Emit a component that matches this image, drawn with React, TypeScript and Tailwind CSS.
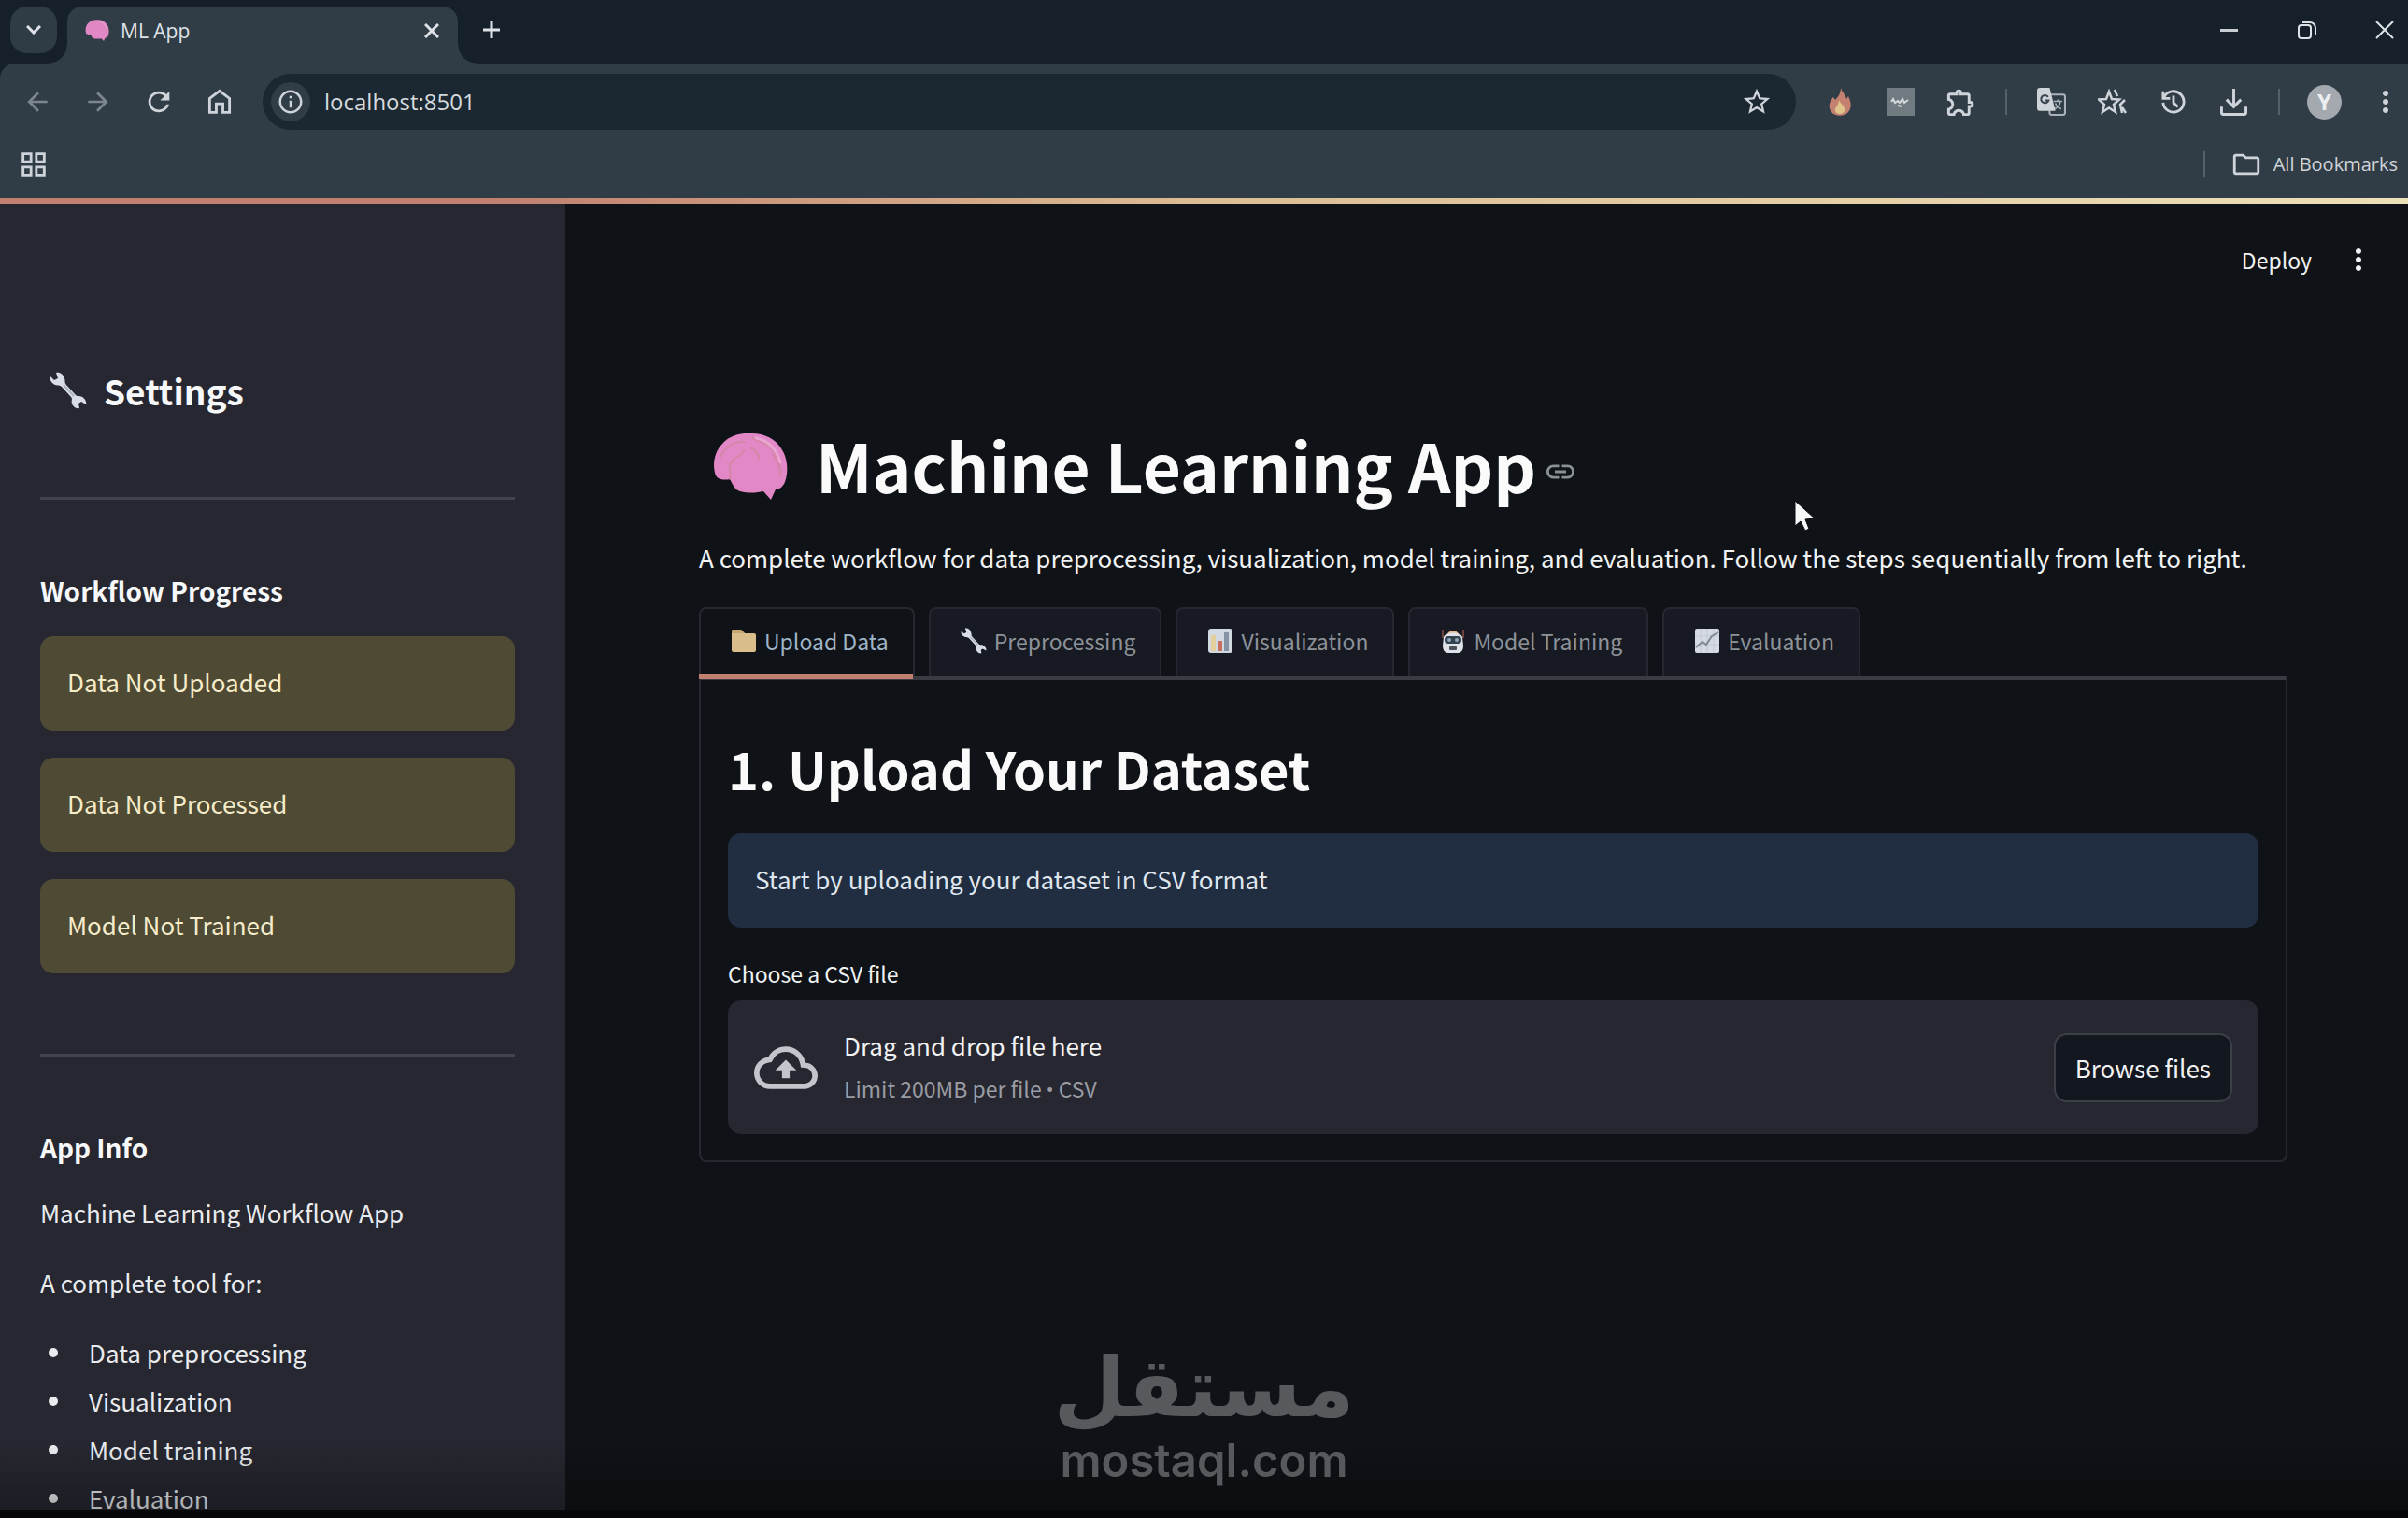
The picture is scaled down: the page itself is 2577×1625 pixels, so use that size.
import React, { useRef } from "react";
import {
  MdArrowBack,
  MdArrowForward,
  MdInfoOutline,
  MdLink,
  MdMoreVert,
  MdOutlineCloudUpload,
  MdOutlineExtension,
  MdOutlineFolder,
  MdOutlineGridView,
  MdRefresh,
  MdStarBorder,
} from "react-icons/md";

type IconProps = { className?: string };

const BrainIcon = ({ className }: IconProps) => (
  <svg viewBox="0 0 80 72" className={className} aria-hidden="true">
    <path
      d="M3 46C-1 36 1 21 10 12C18 3 30 0 42 1C55 1 67 7 73 17C80 27 81 42 77 53C75 58 71 61 67 61L62 72L54 63C46 65 30 66 24 60C21 57 20 53 18 50C12 51 6 51 3 46Z"
      fill="#e388c6"
    />
    <path
      d="M8 26C14 14 24 9 34 10M18 50C20 42 15 38 20 31C24 25 31 26 33 19M42 5C48 12 58 8 62 16M56 12C66 18 70 27 69 36M64 24C70 31 74 38 72 46M40 16C46 19 49 22 49 28"
      fill="none"
      stroke="#c9868f"
      strokeWidth="2"
      strokeLinecap="round"
      opacity="0.6"
    />
    <path d="M46 6C58 8 68 17 72 32" fill="none" stroke="#f0b2dc" strokeWidth="3" strokeLinecap="round" opacity="0.7" />
  </svg>
);

const WrenchIcon = ({ className }: IconProps) => (
  <svg viewBox="0 0 40 40" className={className} aria-hidden="true">
    <path
      d="M7 1C11 0 15 3 16 7C17 10 16 12 18 14L28 25C30 27 32 25 35 27C38 29 40 32 39 35L34 32L31 34L32 39C28 40 25 37 24 34C23 31 25 29 23 27L13 16C11 14 9 15 6 14C2 12 0 9 1 5L5 9L9 7Z"
      fill="#d9dee6"
    />
    <path d="M15 14L26 26" stroke="#a9b2bf" strokeWidth="2" />
  </svg>
);

const FolderEmoji = ({ className }: IconProps) => (
  <svg viewBox="0 0 28 28" className={className} aria-hidden="true">
    <path d="M1 4a2 2 0 0 1 2-2h8l4 4h10a2 2 0 0 1 2 2v16a2 2 0 0 1-2 2H3a2 2 0 0 1-2-2z" fill="#d9bd8b" />
    <path d="M1 4a2 2 0 0 1 2-2h8l4 4H1z" fill="#c8a56c" />
  </svg>
);

const BarsEmoji = ({ className }: IconProps) => (
  <svg viewBox="0 0 28 28" className={className} aria-hidden="true">
    <rect x="1" y="1" width="26" height="26" rx="3" fill="#d3d9e0" />
    <rect x="4" y="8" width="5" height="17" fill="#e2cf9b" />
    <rect x="11" y="14" width="5" height="11" fill="#c8705f" />
    <rect x="18" y="5" width="5" height="20" fill="#8494a5" />
  </svg>
);

const RobotEmoji = ({ className }: IconProps) => (
  <svg viewBox="0 0 28 28" className={className} aria-hidden="true">
    <path d="M3 2v9M25 2v9" stroke="#6e413b" strokeWidth="2" />
    <path d="M8 7C9 2 19 2 20 7z" fill="#e2b98f" />
    <path d="M4 10C6 4 22 4 24 10L25 19C25 25 22 27 19 27H9C6 27 3 25 3 19z" fill="#dfe2e8" />
    <rect x="5" y="9" width="18" height="8" rx="4" fill="#33424f" />
    <circle cx="10" cy="13" r="2" fill="#8fa8ba" />
    <circle cx="18" cy="13" r="2" fill="#8fa8ba" />
    <rect x="10" y="20" width="8" height="4" rx="1" fill="#4b525c" />
  </svg>
);

const TrendEmoji = ({ className }: IconProps) => (
  <svg viewBox="0 0 28 28" className={className} aria-hidden="true">
    <rect x="1" y="1" width="26" height="26" rx="2" fill="#d6dae2" />
    <path d="M7 1v26M14 1v26M21 1v26M1 9h26M1 18h26" stroke="#c3c9d2" />
    <path d="M2 21L9 15L13 18L19 9L26 5" fill="none" stroke="#7e8a90" strokeWidth="2" />
  </svg>
);

const HomeIcon = ({ className }: IconProps) => (
  <svg viewBox="0 0 24 24" className={className} fill="none" stroke="currentColor" strokeWidth="2" aria-hidden="true">
    <path d="M4.5 20V9.5L12 3.8l7.500 5.700V20h-5v-6.500h-5V20z" />
  </svg>
);

const FireIcon = ({ className }: IconProps) => (
  <svg viewBox="0 0 24 30" className={className} aria-hidden="true">
    <path d="M13 0C15 6 18 7 19 12L21 9C24 15 25 21 21 26C17 31 7 31 3 26C-2 19 2 14 5 10L7 13C10 10 13 6 13 0Z" fill="#c4816f" />
    <path d="M11 13C13 18 18 19 17 25C16 29 8 29 7 25C6 21 11 19 11 13Z" fill="#e0c48c" />
  </svg>
);

const TranslateIcon = ({ className }: IconProps) => (
  <svg viewBox="0 0 30 30" className={className} aria-hidden="true">
    <rect x="13" y="7" width="16" height="21" rx="2" fill="none" stroke="#aab1b9" strokeWidth="2" />
    <path d="M17 14h9M21.500 12v2M18 22c4-2 6-5 6-8M19 16c1 3 4 5 6 6" stroke="#aab1b9" strokeWidth="1.500" fill="none" />
    <path d="M3 0h10l6 24H3a3 3 0 0 1-3-3V3a3 3 0 0 1 3-3z" fill="#cfd3da" />
    <path d="M11.500 9.500A4 4 0 1 0 12 13H8.500" fill="none" stroke="#3a4650" strokeWidth="2" />
  </svg>
);

const StarsIcon = ({ className }: IconProps) => (
  <svg viewBox="0 0 32 30" className={className} fill="none" stroke="currentColor" strokeWidth="2.500" aria-hidden="true">
    <path d="M12 4l3 8 8 .5-6 5.500 2 8-7-4.500L5 26l2-8-6-5.500 8-.5z" />
    <path d="M18 2l3 7M29 13l-5 5 2 9M26 21l4 6" />
  </svg>
);

const HistoryIcon = ({ className }: IconProps) => (
  <svg viewBox="0 0 28 28" className={className} fill="none" stroke="currentColor" strokeWidth="3" aria-hidden="true">
    <path d="M3 9A12 12 0 1 1 2 15M2 2v8h8M14 7v8l5 5" />
  </svg>
);

const DownloadIcon = ({ className }: IconProps) => (
  <svg viewBox="0 0 30 30" className={className} fill="none" stroke="currentColor" strokeWidth="3" aria-hidden="true">
    <path d="M15 0v19M7 12l8 8 8-8M1.500 20v6.500a2 2 0 0 0 2 2h23a2 2 0 0 0 2-2V20" />
  </svg>
);

const NoteIcon = ({ className }: IconProps) => (
  <svg viewBox="0 0 30 30" className={className} aria-hidden="true">
    <rect width="30" height="30" fill="#6f7b80" />
    <path d="M5 15l2-3 2 4 3-2 2 2 3-4 2 4 4-3M12 19l4 1" stroke="#d5d8da" strokeWidth="2" fill="none" />
  </svg>
);

const CursorIcon = ({ className }: IconProps) => (
  <svg viewBox="0 0 24 34" className={className} aria-hidden="true">
    <path d="M1 1V28L7 23L12 33L16 31L12 21L22 20Z" fill="#f5f7f9" stroke="#0b0d10" strokeWidth="1" />
  </svg>
);

const ToolButton = ({ label, children }: { label: string; children: React.ReactNode }) => (
  <button type="button" aria-label={label} className="flex h-14 w-[65px] shrink-0 items-center justify-center">
    {children}
  </button>
);

const ToolDivider = () => (
  <div className="flex w-8 shrink-0 justify-center">
    <div className="h-7 w-[2px] bg-[#55606a]"></div>
  </div>
);

const TitleBar = () => (
  <div className="flex h-[68px] shrink-0 items-start bg-[#15202a] pt-[7px] pl-[11px] text-[#dfe3e8]">
    <button type="button" aria-label="Search tabs" className="flex h-[50px] w-[50px] items-center justify-center rounded-[18px] bg-[#303c45]">
      <svg viewBox="0 0 16 10" className="h-[10px] w-4" fill="none" stroke="currentColor" strokeWidth="3">
        <path d="M1 1l7 7 7-7" />
      </svg>
    </button>
    <div className="relative ml-[11px] flex h-[61px] w-[418px] items-center rounded-t-[16px] bg-[#313d46] pr-[14px] pb-[10px] pl-[19px]">
      <div className="absolute bottom-0 -left-5 h-5 w-5 bg-[radial-gradient(circle_at_0_0,transparent_19px,#313d46_20px)]"></div>
      <div className="absolute -right-5 bottom-0 h-5 w-5 bg-[radial-gradient(circle_at_100%_0,transparent_19px,#313d46_20px)]"></div>
      <BrainIcon className="h-[23px] w-[26px]" />
      <span className="ml-3 text-[21px] leading-7">ML App</span>
      <button type="button" aria-label="Close tab" className="ml-auto p-[6px]">
        <svg viewBox="0 0 16 16" className="h-4 w-4" fill="none" stroke="currentColor" strokeWidth="3">
          <path d="M1 1l14 14M15 1L1 15" />
        </svg>
      </button>
    </div>
    <button type="button" aria-label="New tab" className="ml-[22px] flex h-[50px] w-7 items-center justify-center">
      <svg viewBox="0 0 18 18" className="h-[18px] w-[18px]" stroke="currentColor" strokeWidth="3">
        <path d="M9 0v18M0 9h18" />
      </svg>
    </button>
    <div className="-mr-4 ml-auto flex">
      <button type="button" aria-label="Minimize" className="flex h-[50px] w-[83px] items-center justify-center">
        <span className="h-[3px] w-[19px] bg-[#c9ced4]"></span>
      </button>
      <button type="button" aria-label="Restore" className="flex h-[50px] w-[83px] items-center justify-center">
        <svg viewBox="0 0 20 20" className="h-5 w-5" fill="none" stroke="currentColor" strokeWidth="2">
          <rect x="1" y="5" width="13" height="14" rx="3" />
          <path d="M5 2h8a6 6 0 0 1 6 6v7" />
        </svg>
      </button>
      <button type="button" aria-label="Close" className="flex h-[50px] w-[83px] items-center justify-center">
        <svg viewBox="0 0 20 20" className="h-5 w-5" stroke="currentColor" strokeWidth="2">
          <path d="M1 1l18 18M19 1L1 19" />
        </svg>
      </button>
    </div>
  </div>
);

const Toolbar = () => (
  <div className="shrink-0 bg-[#15202a]">
    <div className="rounded-tl-[16px] bg-[#313d46] pt-[11px] text-[#cfd4da]">
      <div className="flex h-[60px] items-center pl-[7px]">
        <ToolButton label="Back">
          <MdArrowBack className="h-8 w-8 text-[#7d868e]" />
        </ToolButton>
        <ToolButton label="Forward">
          <MdArrowForward className="h-8 w-8 text-[#7d868e]" />
        </ToolButton>
        <ToolButton label="Reload">
          <MdRefresh className="h-[34px] w-[34px]" />
        </ToolButton>
        <ToolButton label="Home">
          <HomeIcon className="h-[34px] w-[34px]" />
        </ToolButton>
        <div className="ml-[14px] flex h-[60px] min-w-0 flex-1 items-center rounded-full bg-[#1b2731] pr-[10px] pl-[9px]">
          <button type="button" aria-label="Site information" className="flex h-[42px] w-[42px] shrink-0 items-center justify-center rounded-full bg-[#313d46]">
            <MdInfoOutline className="h-[30px] w-[30px]" />
          </button>
          <input
            type="text"
            aria-label="Address"
            defaultValue="localhost:8501"
            className="ml-[15px] min-w-0 flex-1 bg-transparent text-2xl leading-9 text-[#d5dade] outline-none"
          />
          <ToolButton label="Bookmark this tab">
            <MdStarBorder className="h-[34px] w-[34px]" />
          </ToolButton>
        </div>
        <div className="-mr-2 ml-[14px] flex items-center">
          <ToolButton label="Fire extension">
            <FireIcon className="h-[30px] w-6" />
          </ToolButton>
          <ToolButton label="Note extension">
            <NoteIcon className="h-[30px] w-[30px]" />
          </ToolButton>
          <ToolButton label="Extensions">
            <MdOutlineExtension className="h-[35px] w-[35px]" />
          </ToolButton>
          <ToolDivider />
          <ToolButton label="Translate">
            <TranslateIcon className="h-[31px] w-[31px]" />
          </ToolButton>
          <ToolButton label="Bookmarks">
            <StarsIcon className="h-[30px] w-8" />
          </ToolButton>
          <ToolButton label="History">
            <HistoryIcon className="h-[26px] w-[26px]" />
          </ToolButton>
          <ToolButton label="Downloads">
            <DownloadIcon className="h-[29px] w-[29px]" />
          </ToolButton>
          <ToolDivider />
          <ToolButton label="Profile">
            <span className="flex h-[37px] w-[37px] items-center justify-center rounded-full bg-[#a4a9af] text-2xl font-bold text-[#eceef0]">Y</span>
          </ToolButton>
          <ToolButton label="Browser menu">
            <MdMoreVert className="h-9 w-9" />
          </ToolButton>
        </div>
      </div>
      <div className="flex h-[73px] items-center justify-between pr-[11px] pl-[19px]">
        <button type="button" aria-label="Apps">
          <MdOutlineGridView className="h-[34px] w-[34px]" />
        </button>
        <div className="flex items-center">
          <ToolDivider />
          <button type="button" className="ml-3 flex items-center gap-3 text-xl leading-7">
            <MdOutlineFolder className="h-[34px] w-[34px]" />
            All Bookmarks
          </button>
        </div>
      </div>
    </div>
  </div>
);

const statuses = ["Data Not Uploaded", "Data Not Processed", "Model Not Trained"];
const features = ["Data preprocessing", "Visualization", "Model training", "Evaluation"];

const Sidebar = () => (
  <aside className="w-[605px] shrink-0 overflow-hidden bg-[#262730] pt-[172px] pr-[54px] pl-[43px] text-[26px] leading-[44px] text-[#e9ebee]">
    <h2 className="flex items-center gap-[18px] pl-[10px] text-[37px] leading-[56px] font-bold text-[#f7f8fa]">
      <WrenchIcon className="h-10 w-10" />
      Settings
    </h2>
    <hr className="mt-[86px] border-t-[3px] border-[#40434b]" />
    <h3 className="mt-[75px] text-[28px] font-bold text-[#f7f8fa]">Workflow Progress</h3>
    <div className="mt-[27px] flex flex-col gap-[29px]">
      {statuses.map((status) => (
        <div key={status} className="flex h-[101px] items-center rounded-[14px] bg-[#4e4a34] px-[29px] pb-1 text-[#f6ecca]">
          {status}
        </div>
      ))}
    </div>
    <hr className="mt-[86px] border-t-[3px] border-[#40434b]" />
    <h3 className="mt-[75px] text-[28px] font-bold text-[#f7f8fa]">App Info</h3>
    <p className="mt-[26px]">Machine Learning Workflow App</p>
    <p className="mt-[31px]">A complete tool for:</p>
    <ul className="mt-[27px] leading-[52px]">
      {features.map((feature) => (
        <li key={feature} className="flex items-center pl-[9px]">
          <span className="mr-[33px] h-[10px] w-[10px] rounded-full bg-[#e9ebee]"></span>
          {feature}
        </li>
      ))}
    </ul>
  </aside>
);

const tabs = [
  { name: "Upload Data", Icon: FolderEmoji },
  { name: "Preprocessing", Icon: WrenchIcon },
  { name: "Visualization", Icon: BarsEmoji },
  { name: "Model Training", Icon: RobotEmoji },
  { name: "Evaluation", Icon: TrendEmoji },
];

const Tabs = () => (
  <div role="tablist" className="mt-[31px] flex gap-[15px]">
    {tabs.map(({ name, Icon }, index) => (
      <button
        key={name}
        type="button"
        role="tab"
        aria-selected={index === 0}
        className={
          index === 0
            ? "relative flex h-[74px] items-center gap-2 rounded-t-lg border-2 border-b-0 border-[#262730] pr-[26px] pb-1 pl-8 text-[#9fb4c6]"
            : "flex h-[74px] items-center gap-2 rounded-t-lg border-2 border-b-0 border-[#262730] bg-[#171a22] pr-[26px] pb-1 pl-8 text-[#8d9299]"
        }
      >
        <Icon className="h-7 w-7" />
        <span className="text-[23px] leading-9">{name}</span>
        {/* Active tab underline */}
        {index === 0 && <span className="absolute right-0 -bottom-[3px] -left-[2px] h-[6px] bg-[#c07f6f]"></span>}
      </button>
    ))}
  </div>
);

const UploadPanel = () => {
  const fileInput = useRef<HTMLInputElement>(null);

  return (
    <section className="rounded-b-lg border-2 border-t-4 border-[#262730] border-t-[#3a3b43] px-[29px] pt-[52px] pb-7">
      <h2 className="text-[56px] leading-[84px] font-bold text-[#fafafa]">1. Upload Your Dataset</h2>
      <div className="mt-7 flex h-[101px] items-center rounded-[14px] bg-[#212d40] px-[29px] pb-1 text-[#dfe6ee]">
        Start by uploading your dataset in CSV format
      </div>
      <label htmlFor="csv-file" className="mt-[31px] block text-[23px] leading-9">
        Choose a CSV file
      </label>
      <div className="mt-[11px] flex h-[143px] items-center rounded-[14px] bg-[#262730] px-[28px]">
        <MdOutlineCloudUpload className="h-[68px] w-[68px] text-[#c2c5cc]" />
        <div className="ml-7 pt-1">
          <div>Drag and drop file here</div>
          <div className="text-[23px] leading-[48px] text-[#9a9ca3]">
            Limit 200MB per file <span className="font-['Roboto',sans-serif]">•</span> CSV
          </div>
        </div>
        <input ref={fileInput} id="csv-file" type="file" accept=".csv" className="sr-only" />
        <button
          type="button"
          onClick={() => fileInput.current?.click()}
          className="ml-auto h-[74px] rounded-[14px] border-2 border-[#3b3f46] bg-[#131720] px-[21px]"
        >
          Browse files
        </button>
      </div>
    </section>
  );
};

const Main = () => (
  <main className="min-w-0 flex-1 pr-[129px] pl-[143px] text-[26px] leading-[44px] text-[#f0f2f4]">
    <div className="-mr-[94px] flex h-[120px] items-center justify-end gap-8">
      <button type="button" className="text-[23px]">Deploy</button>
      <button type="button" aria-label="App menu">
        <MdMoreVert className="h-9 w-9" />
      </button>
    </div>
    <div className="mt-[111px] flex items-center">
      <BrainIcon className="mt-1 ml-[15px] h-[72px] w-20" />
      <h1 className="ml-[30px] text-[71px] leading-[96px] font-bold text-[#fafafa]">Machine Learning App</h1>
      <a href="#machine-learning-app" aria-label="Link to heading" className="ml-2 pt-4 text-[#8b8f96]">
        <MdLink className="h-9 w-9" />
      </a>
    </div>
    <p className="mt-[30px]">
      A complete workflow for data preprocessing, visualization, model training, and evaluation. Follow the steps
      sequentially from left to right.
    </p>
    <Tabs />
    <UploadPanel />
  </main>
);

const Watermark = () => (
  <div className="pointer-events-none absolute bottom-[31px] left-1/2 flex -translate-x-1/2 flex-col items-center text-[#58595d]">
    <span lang="ar" dir="rtl" className="font-['DejaVu_Sans',sans-serif] text-[88px] leading-[96px] font-bold">
      مستقل
    </span>
    <span className="font-['Inter',sans-serif] text-[49px] leading-[60px] font-semibold">mostaql.com</span>
  </div>
);

const App = () => {
  return (
    <div className="relative flex h-screen flex-col overflow-hidden bg-[#0f1216] font-['Open_Sans',sans-serif]">
      <TitleBar />
      <Toolbar />
      <div className="h-[6px] shrink-0 bg-gradient-to-r from-[#c07f6f] from-20% via-[#dcbd94] via-50% to-[#ece0b8]"></div>
      <div className="flex min-h-0 flex-1 font-['Noto_Sans_CJK_SC',sans-serif]">
        <Sidebar />
        <Main />
      </div>
      <div className="h-[9px] shrink-0 bg-[#08090b]"></div>
      <div className="pointer-events-none absolute inset-x-0 bottom-0 h-20 bg-gradient-to-b from-transparent to-black/30"></div>
      <Watermark />
      <CursorIcon className="pointer-events-none absolute top-[534px] left-[1920px] h-[36px] w-6" />
    </div>
  );
};

export default App;
